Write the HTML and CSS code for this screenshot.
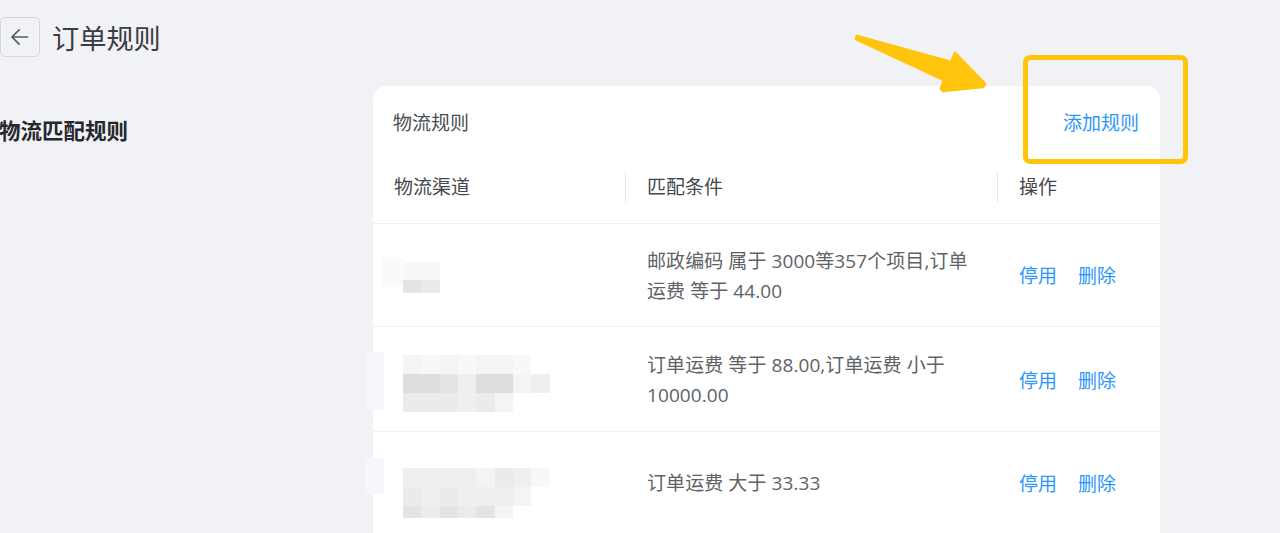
FILE: index.html
```html
<!DOCTYPE html>
<html lang="zh-CN">
<head>
<meta charset="utf-8">
<title>订单规则</title>
<link rel="stylesheet" href="styles.css">
</head>
<body>
<div class="page">
  <header class="top">
    <button class="back" aria-label="返回">
      <svg width="20" height="20" viewBox="0 0 20 20" fill="none" stroke="#555a60" stroke-width="1.6"><path d="M18.2 10H2.2M9.6 2.4 2 10l7.6 7.6"/></svg>
    </button>
    <h1 class="title">订单规则</h1>
  </header>
  <section class="layout">
    <h2 class="side">物流匹配规则</h2>
    <div class="card">
      <div class="card-head">
        <span class="card-title">物流规则</span>
        <a class="link">添加规则</a>
      </div>
      <div class="thead">
        <div class="th first">物流渠道</div>
        <div class="th"><span class="sep"></span>匹配条件</div>
        <div class="th"><span class="sep"></span>操作</div>
      </div>
      <div class="row row-a">
        <div class="td first">
          <div class="patch pa1"></div>
          <div class="mosaic m-small">
            <i class="s1"></i><i class="s1"></i><i class="s0"></i><i class="s0"></i>
            <i class="s5"></i><i class="s4"></i><i class="s0"></i><i class="s0"></i>
          </div>
        </div>
        <div class="td cond">邮政编码 属于 3000等357个项目,订单运费 等于 44.00</div>
        <div class="td act"><a class="link">停用</a><a class="link">删除</a></div>
      </div>
      <div class="row row-b">
        <div class="td first">
          <div class="patch pb1"></div>
          <div class="mosaic">
            <i class="s2"></i><i class="s1"></i><i class="s2"></i><i class="s1"></i><i class="s2"></i><i class="s2"></i><i class="s1"></i><i class="s0"></i><i class="s0"></i>
            <i class="s6"></i><i class="s6"></i><i class="s5"></i><i class="s3"></i><i class="s6"></i><i class="s6"></i><i class="s2"></i><i class="s3"></i><i class="s0"></i>
            <i class="s4"></i><i class="s4"></i><i class="s4"></i><i class="s3"></i><i class="s4"></i><i class="s2"></i><i class="s0"></i><i class="s0"></i><i class="s0"></i>
          </div>
        </div>
        <div class="td cond">订单运费 等于 88.00,订单运费 小于 10000.00</div>
        <div class="td act"><a class="link">停用</a><a class="link">删除</a></div>
      </div>
      <div class="row row-c">
        <div class="td first">
          <div class="patch pc1"></div>
          <div class="mosaic m-last">
            <i class="s3"></i><i class="s3"></i><i class="s3"></i><i class="s3"></i><i class="s2"></i><i class="s4"></i><i class="s3"></i><i class="s1"></i><i class="s0"></i>
            <i class="s4"></i><i class="s3"></i><i class="s4"></i><i class="s3"></i><i class="s3"></i><i class="s3"></i><i class="s2"></i><i class="s0"></i><i class="s0"></i>
            <i class="s5"></i><i class="s4"></i><i class="s5"></i><i class="s4"></i><i class="s5"></i><i class="s2"></i><i class="s0"></i><i class="s0"></i><i class="s0"></i>
          </div>
        </div>
        <div class="td cond">订单运费 大于 33.33</div>
        <div class="td act"><a class="link">停用</a><a class="link">删除</a></div>
      </div>
    </div>
  </section>
</div>
<div class="mark-box"></div>
<svg class="mark-arrow" width="1280" height="533" viewBox="0 0 1280 533" aria-hidden="true">
  <polygon points="857,36 951,62 955,53 985,84 983,87 943,91 941,89 944,80 856,39" fill="#ffc40c" stroke="#ffc40c" stroke-width="2.6" stroke-linejoin="round"/>
</svg>
</body>
</html>
```
FILE: styles.css
```css
* { box-sizing: border-box; }
html, body { margin: 0; padding: 0; height: 533px; overflow: hidden; }
body {
  position: relative;
  background: #f1f2f6;
  font-family: "Open Sans", "Noto Sans CJK SC", sans-serif;
  font-size: 19px;
  line-height: 30px;
  color: #555;
}
.page { padding-top: 17px; }
.top { display: flex; align-items: center; height: 40px; gap: 12px; }
.back {
  width: 40px; height: 40px; padding: 0;
  display: flex; align-items: center; justify-content: center;
  background: transparent;
  border: 1.5px solid #d5d7db; border-radius: 5px;
}
.title { margin: 0; padding-top: 4px; font-size: 27.2px; font-weight: 400; color: #3a3d42; line-height: 40px; }
.layout { display: flex; margin-top: 29px; }
.side {
  width: 373px; flex: none; margin: 0 0 0 -1px; padding-top: 30px;
  font-size: 21.5px; line-height: 30px; font-weight: 700; color: #25282c;
}
.card { width: 787px; flex: none; margin-left: 1px; background: #fff; border-radius: 13px 13px 0 0; }
.card-head {
  display: flex; align-items: center; justify-content: space-between;
  height: 71px; padding: 3px 21px 0 20px;
}
.card-title { color: #4a4d52; }
.link { color: #2d96f8; }
.thead { display: grid; grid-template-columns: 252px 372px 163px; height: 67px; border-bottom: 1px solid #eeeff1; padding-bottom: 6px; align-items: center; }
.th { position: relative; padding: 0 0 0 22px; color: #44474c; }
.th.first { padding-left: 21px; }
.sep { position: absolute; left: 0; top: 0; width: 1px; height: 30px; background: #e6e7ea; }
.row { display: grid; grid-template-columns: 252px 372px 163px; align-items: center; border-bottom: 1px solid #f0f1f3; }
.row-a { height: 103px; }
.row-b { height: 105px; }
.row-c { height: 104px; border-bottom: 0; }
.td { position: relative; }
.td.first { padding-left: 30px; }
.cond { padding: 2px 22px 0; line-height: 30px; letter-spacing: 0.08px; color: #606266; }
.row-c .cond { padding: 0 22px 2px; }
.act { display: flex; gap: 21px; padding: 2px 0 0 22px; }
.row-b .act { padding-top: 4px; }
.row-c .act { padding-top: 0; }
.mosaic { display: grid; grid-template-columns: repeat(9, 18.35px); grid-auto-rows: 18.7px; margin-top: 9px; }
.m-small { grid-template-columns: repeat(4, 18.35px); grid-template-rows: 18px 13px; grid-auto-rows: 13px; margin-top: 5px; }
.m-last { grid-template-rows: 19px 19px 12px; margin-top: 18px; }
.s0 { background: #fff; }
.s1 { background: #f8f8f8; }
.s2 { background: #f4f4f4; }
.s3 { background: #efefef; }
.s4 { background: #ebebeb; }
.s5 { background: #e4e4e4; }
.s6 { background: #dedede; }
.patch { position: absolute; background: #fafafb; }
.pa1 { left: 9px; top: 2px; width: 21px; height: 26px; }
.pb1 { left: -8px; top: 6px; width: 19px; height: 57px; background: #f5f6f9; }
.pc1 { left: -8px; top: 8px; width: 19px; height: 36px; background: #f6f7fa; }
.mark-box {
  position: absolute; left: 1023px; top: 55px; width: 165px; height: 109px;
  border: 5px solid #ffc40c; border-radius: 7px;
}
.mark-arrow { position: absolute; left: 0; top: 0; pointer-events: none; }
```
